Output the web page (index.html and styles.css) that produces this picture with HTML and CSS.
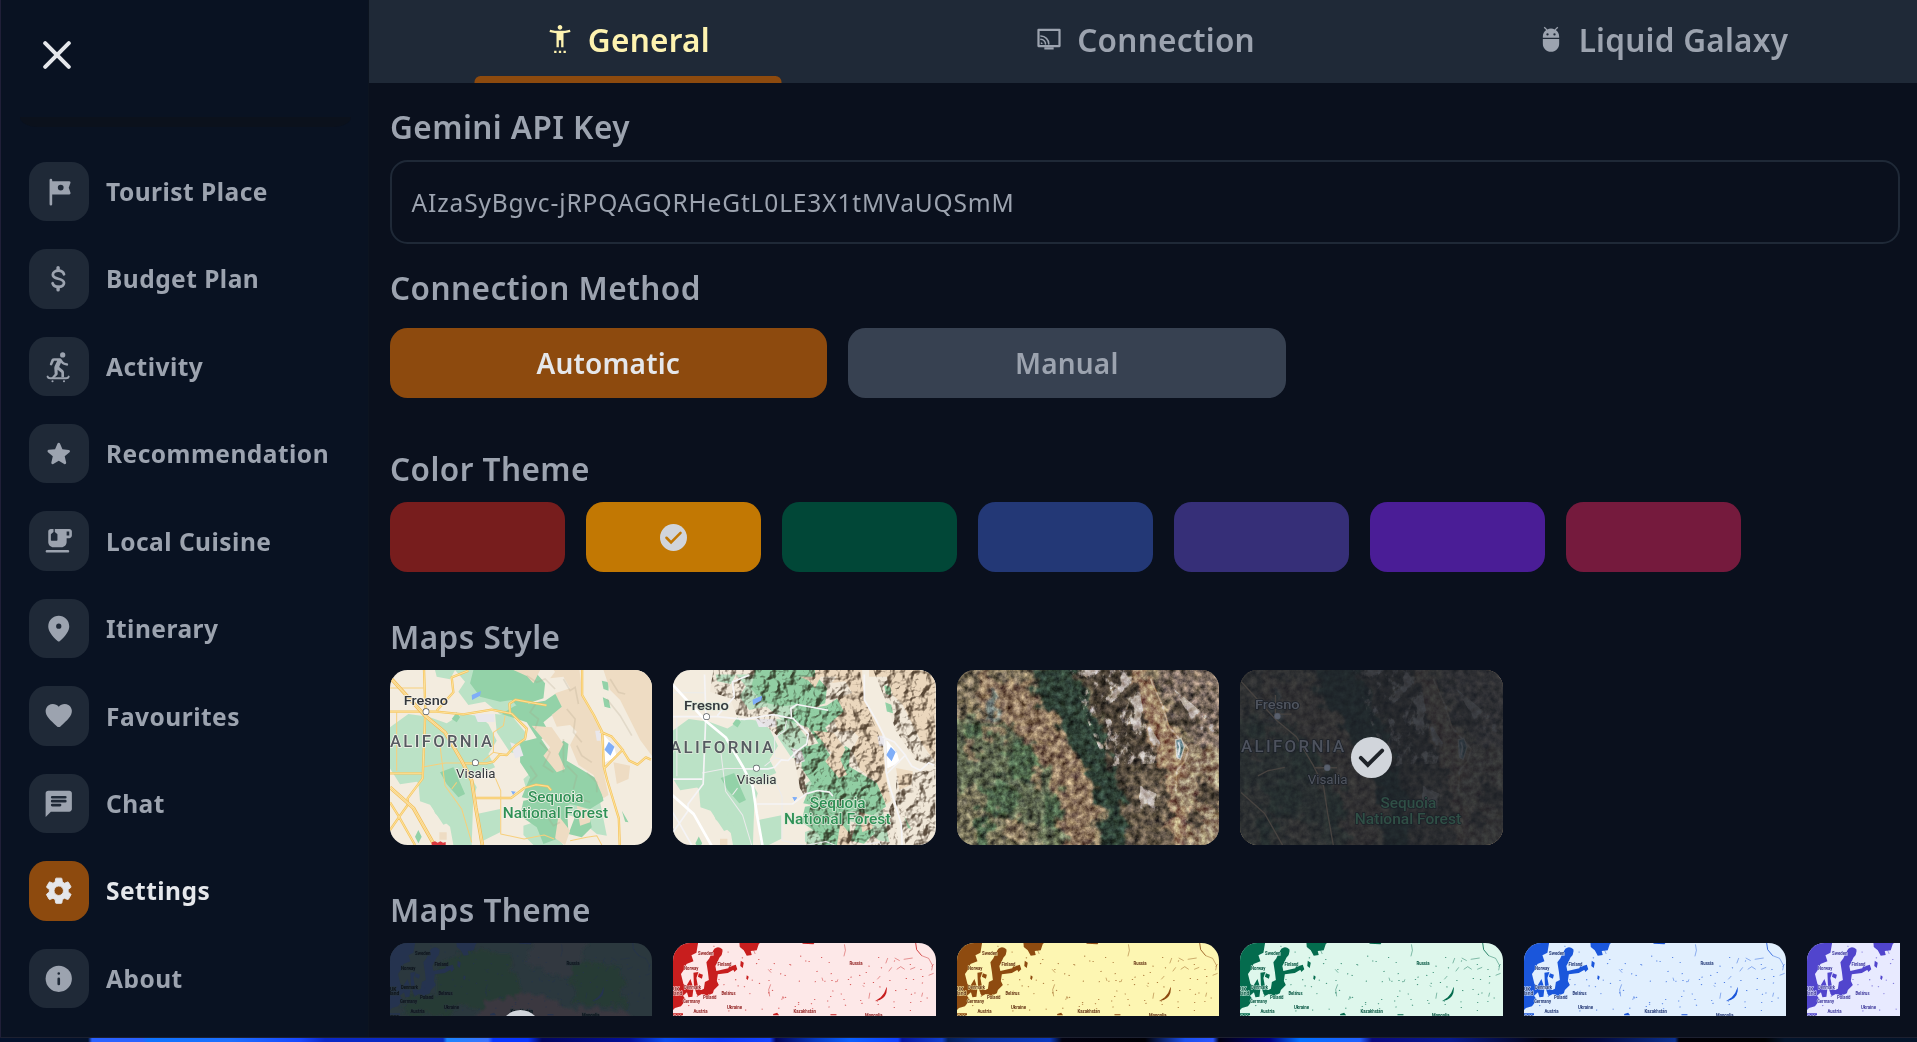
FILE: index.html
```html
<!DOCTYPE html>
<html lang="en">
<head>
<meta charset="utf-8">
<title>Settings</title>
<link rel="stylesheet" href="styles.css">
</head>
<body>
<svg class="defs" aria-hidden="true">
  <defs>
    <symbol id="check" viewBox="2 2 20 20"><circle cx="12" cy="12" r="10" fill="#d1d5db"/><path d="M6.800 12.200l3.400 3.400 7-7" fill="none" stroke="var(--tick)" stroke-width="1.900" stroke-linecap="round"/></symbol>

    <filter id="relief" x="0" y="0" width="100%" height="100%" color-interpolation-filters="sRGB">
      <feTurbulence type="fractalNoise" baseFrequency=".028" numOctaves="5" seed="8"/>
      <feDiffuseLighting surfaceScale="24" lighting-color="#fff" diffuseConstant="1.300"><feDistantLight azimuth="215" elevation="50"/></feDiffuseLighting>
      <feColorMatrix values=".62 0 0 0 .37  0 .66 0 0 .32  0 0 .7 0 .27  0 0 0 1 0"/>
      <feComposite in2="SourceGraphic" operator="in"/>
    </filter>
    <filter id="grain" x="0" y="0" width="100%" height="100%" color-interpolation-filters="sRGB">
      <feTurbulence type="fractalNoise" baseFrequency=".05" numOctaves="5" seed="4"/>
      <feColorMatrix values="1.200 .1 0 0 -.15  1.200 .1 0 0 -.15  1.200 0 .1 0 -.15  0 0 0 0 1"/>
      <feComposite in2="SourceGraphic" operator="in"/>
    </filter>
    <filter id="snow" x="0" y="0" width="100%" height="100%" color-interpolation-filters="sRGB">
      <feTurbulence type="fractalNoise" baseFrequency=".026 .018" numOctaves="5" seed="11"/>
      <feColorMatrix values="0 0 0 0 .74  0 0 0 0 .7  0 0 0 0 .67  7 0 0 0 -3.500"/>
      <feComposite in2="SourceGraphic" operator="in"/>
    </filter>
    <filter id="rough" x="-10%" y="-10%" width="120%" height="120%">
      <feTurbulence type="fractalNoise" baseFrequency=".025" numOctaves="5" seed="3" result="n"/>
      <feDisplacementMap in="SourceGraphic" in2="n" scale="90" xChannelSelector="R" yChannelSelector="G"/>
      <feGaussianBlur stdDeviation="3"/>
    </filter>
    <filter id="haze" x="-10%" y="-10%" width="120%" height="120%">
      <feTurbulence type="fractalNoise" baseFrequency=".09" numOctaves="3" seed="6" result="n"/>
      <feDisplacementMap in="SourceGraphic" in2="n" scale="16" xChannelSelector="R" yChannelSelector="G"/>
      <feGaussianBlur stdDeviation=".8"/>
    </filter>

    <g id="ground">
      <path fill="#f3ecdf" d="M0 0h860v600H0z"/>
      <g fill="#bbe2c6">
        <path d="M165 33h60l-15 28-40-8zM225 33h200l20 110-70 35-60-50-50 10-30-40 20-30z"/>
        <path d="M30 205l55-40 60 8 55 20 45-28 50 5 30 25 25 50-25 40 20 40-60 25-35 28 30 30-5 150h-55l-10-55-45-40-25-70-30-25-50 8-35-55-40-15z"/>
        <path d="M115 370l60-50 35 25 55-5 25 45-20 65-30 10-25-45-15 35 20 35-30 12-40-60-30-10z"/>
        <path d="M345 165l50 5 45 55-10 60-40-5-40-60zM290 465l70-15v70l-60 30zM430 360l60-50 170 120 20 100-30-5-60-50-80-20-60-25zM430 500l60-20 60 78h-90l-30-30zM40 300l25 5 5 20-30 5z"/>
      </g>
      <g fill="#93d2a8">
        <path d="M280 33h180l35 40-5 45-45 15-20 25-30-35-35 5-60-15-30-40z"/>
        <path d="M365 165l40-25 90-15 30-20 40 15-10 35-35 10-30 25 20 35-35 20-35-55z"/>
        <path d="M420 250l60-15 30 45 40-35 15 10-5 50 100 60 10 60-40 25-60-15-65 40-30-50-50-10 25-60-30-45z"/>
        <path d="M430 425l60-10 70 25 5 80-35 20-40 15-20-50-50-35zM590 460l35-5 10 50-30 30-40-10zM115 513l10 20-10 20-10-20zM180 340l40-15 35 80-20 10-35-40zM215 180l15-20 10 15-10 15zM665 65l20 5v25l-15-5zM718 78l22 8-8 20-17-12zM668 115l18 8 5 25-18-5zM725 455l20 35-10-2z"/>
      </g>
      <g fill="#eedcc3">
        <path d="M480 33h118l10 80 50 95 5 55 10 90 12 55-15 10-30-70-45-30-25-60 20-40-20-20-40 5-15-35 30-25-20-40 45-15-20-35-40 5 15-20-30-30z"/>
        <path d="M400 33h80l-20 40-20-22zM455 200l60 5 35 50-15 30 20 45-25 10-40-50 20-25zM620 33h50l20 60 30 30 60 120 37 50V33H690zM700 310l50 10-5 40-35 15zM590 440l45 15-5 35-30 10zM178 520h22v22h-22zM535 470l35 45-15 43-30-20z"/>
      </g>
      <path fill="#e9e7ec" d="M283 165h60v24h-50zM390 250l30 10 10 30-25 8zM645 215h20v30h-15z"/>
      <path fill="#fff" d="M672 228l30 35 8 30-35 17z"/>
      <path fill="#7faef8" d="M275 108l28-12-3 14-24 13zM686 248l17 15-12 27-18-18zM393 396l14 2-8 10z"/>
    </g>
    <g id="shade" fill="none" stroke="#a99c80" stroke-opacity=".22" stroke-width="5">
      <path d="M440 50l30 20 25-10 30 30M550 60l20 35 15-10 10 50M470 130l-20 30 25 20-10 30M560 150l25 30-5 40 25 30M480 250l30 30-20 40 30 20M590 260l15 30 30 20M550 240v100M450 320l20 30-20 20M620 340l30 30v30M500 470l20 30 20-10M690 60l25 40 20 5M680 120l40 50 35 60M600 420l30 10M560 320l30 30-10 40"/>
    </g>
    <g id="highways" fill="none" stroke-linejoin="round">
      <path d="M30 55l105 115 60 50 50 85 30 60 12 80 20 113M30 385l70 62 60 106"/>
    </g>
    <g id="roads" fill="none" stroke-linejoin="round">
      <path d="M132 33l4 120-8 205-45 60v20l-25 35-28 40M30 158h140l80 8 85-14 60 12 45 45-5 30-30 22-25 27-20-2-20 22-20 5h-67M170 155l50-55-5-45 30-12 20-8M390 162l-2-28 18-12 65 12 28 5M288 417h105l40-30 35-10 35 5 10 12M606 33v75l35 60 25 50 5 105 10 40 35 115 3 85M672 328l55-55 20 32 25 12 25-22 15 7M660 218l35 15 35 42M30 430l25 40 50 88M30 343h95"/>
    </g>
    <g id="lanes" fill="none" stroke-linejoin="round">
      <path d="M30 87h100M50 160v175M125 325l70-13h65M180 260l5 40 10 80 50 70 30 100M345 355l17 40v130l70 15 60-12 30 12M310 305l30-25 25 5M375 170l-5 30-30 20v60M215 390l15-20M570 545l50-10 30-5 15 28"/>
    </g>
    <g id="places" font-family="Roboto, sans-serif" paint-order="stroke" stroke-width="4.500" stroke-linejoin="round">
      <g class="town"><text x="71" y="138" font-size="40" font-weight="500" textLength="133" lengthAdjust="spacingAndGlyphs">Fresno</text>
      <text x="228" y="358" font-size="37" textLength="118" lengthAdjust="spacingAndGlyphs">Visalia</text></g>
      <text class="state" x="30" y="265" font-size="50" font-weight="500" textLength="306">ALIFORNIA</text>
      <g class="park" text-anchor="middle" font-weight="500"><text x="527" y="430" font-size="43" textLength="166" lengthAdjust="spacingAndGlyphs">Sequoia</text>
      <text x="526" y="477" font-size="43" textLength="316" lengthAdjust="spacingAndGlyphs">National Forest</text></g>
      <g class="dot" stroke-width="4"><circle cx="138" cy="158" r="8"/><circle cx="286" cy="311" r="8"/></g>
    </g>

    <g id="satellite">
      <path fill="#7b6f59" d="M0 0h900v600H0z"/>
      <g filter="url(#rough)">
        <path fill="#5d664f" d="M0 170l140 10 100-50 90 120 40 120 5 220H230L110 430 0 400z"/>
        <path fill="#747059" d="M0 390h140l60 100 100 20-20 80H0z"/>
        <path fill="#4a6146" d="M120 380l90-20 30 70-50 40-70-20zM190 250l80-10 60 60-20 80-80-20zM110 470h40v110h-40zM60 200l60-10 20 40-50 20zM300 400l60 20-10 100-50-30z"/>
        <path fill="#87765d" d="M60 240l50 10 10 40-40 10zM120 200l80 10-10 30-70-5zM270 320l40 10-10 50-40-10zM170 470l80 20 20 60-80-10z"/>
        <path fill="#8b735b" d="M110 40l110 20 80 60 80 120 60 110 30 90-20 150h-90l10-130-30-110-100-130-120-70z"/>
        <path fill="#6b746e" d="M130 105l60 15-10 50-50-15z"/>
        <path fill="#2d4134" d="M270 10h130l60 140 80 180 20 280h-70l-10-170-60-140-50-90-80-90z"/>
        <path fill="#4a4034" d="M400 10h190l20 160 60 180 20 260H570l-25-200-60-220z"/>
        <path fill="#625647" d="M560 330l80-20 60 100v200H560z"/>
        <path fill="#9a7d64" d="M590 10l50 60 60 150 40 60 20 60-25 60 10 210h-40l-20-230-40-110-60-150z"/>
        <path fill="#7b6c60" d="M640 10h260v270l-120-10-90-100z"/>
        <path fill="#937f68" d="M760 260h140v350H760l-50-200z"/>
        <path fill="#483f34" d="M780 350l50 30 10 60-60-20zM740 440l40 50-10 30-40-50zM690 130l60 50 10 40-60-30z"/>
      </g>
      <path filter="url(#snow)" d="M390 33h200l20 140 50 80-20 60-140 10-60-140zM600 380l60 30-10 90-60-10zM700 90l110 90 20 40-60-10z"/>
      <path fill="none" stroke="#bba38a" stroke-width="5" d="M630 60l36 80 20 65 36 40 22 25-10 35-25 30-3 60"/>
      <path fill="#6f8d93" stroke="#c9c3b8" stroke-width="4" d="M705 243l17-5 10 25-12 38-10-5z"/>
      <path fill="none" stroke="#dce2e8" stroke-width="5" d="M714 250l4 16-4 22"/>
      <path class="overlay" filter="url(#grain)" d="M0 0h900v600H0z"/>
    </g>

    <g id="water" transform="scale(.4983 .3333) translate(-609 -191)">
      <path d="M600 185h60l-4 35-10 8 4 18-14 8-4 15-7 15 5 30 6 5 8-20 6 28-2 25-8 2-3-15-8 10 6 12-10 20-12 5-14 20zM692 208q8-10 16 2 2 15-6 25-4 15-8 25l2 15 24-8 2-8 10 2 1 8-14 12-20 4-2 20 4 12-10 15-2 10-12 8-10-6-8 6-4-10 16-12 2-20 8-6-2-25-3-28 6-12 4-14zM650 280l10-2-4 18 3 25 8 15-4 10-8-8-4-20zM742 185h45l-6 10-4 18-12 2 2 12-10 2-6-16-8-10zM727 260l8-4 3 14-6 8zM745 244l6 6-2 16-5-6zM661 282l8 4-2 12-8-6zM757 288l4 4-2 10-3-4zM868 185l25 5-2 5-22-2z"/>
      <path d="M1038 322q2 30-14 40l-10 4 12-12q8-12 12-32zM810 404l8-4 4 8h-12zM925 405h12v3h-12zM609 402h20v6h-20z"/>
      <path fill="none" stroke="currentColor" stroke-width="2" d="M1096 191l2 20 10 18"/>
      <path fill="none" stroke="currentColor" stroke-width="1.500" stroke-opacity=".7" d="M1108 229l14 8 8 22-2 14M953 195l2 18-3 18M805 315l-4 16 2 20M1040 236l-4 16M1054 236l10 8M1072 240l18-4M1048 264l-6 12M1058 270l8-8 8 8M1085 270l10-6M1025 290l-6 10M940 300l-2 8M908 295l2 10M830 350l-3 12M1128 262l4-8M1122 288l10-6M1110 340l-2 12M800 270l6 10M770 210l4 14M1004 340l-2 18M990 318l3 5"/>
      <path fill="none" stroke="currentColor" stroke-width="2.500" stroke-opacity=".8" stroke-dasharray="2.500 31" d="M700 300l110 4 60-80 70 130 80-120 90 30-40 80M690 200l180 110 90-10 170 60M690 350l90-40 100 80 120-20 110 30M780 240l50 20 90-30 10 80 110-50M720 395l120-10 100-25 150 10M640 380l30-50 60-20 40 40M1010 310l110-20-30 60 30 30M800 340l60 30 70-20"/>
    </g>
    <g id="labels" font-family="Roboto, sans-serif" font-size="4.900" font-weight="700" paint-order="stroke" stroke-width=".8">
      <text x="25" y="11.500" textLength="15.500" lengthAdjust="spacingAndGlyphs">Sweden</text><text x="44.500" y="22.500" textLength="14" lengthAdjust="spacingAndGlyphs">Finland</text><text x="11" y="26.500" textLength="14.500" lengthAdjust="spacingAndGlyphs">Norway</text><text x="176.500" y="22" textLength="13" lengthAdjust="spacingAndGlyphs">Russia</text><text x="11" y="45.500" textLength="17" lengthAdjust="spacingAndGlyphs">Denmark</text><text x="0" y="47.500">UK</text><text x="-6" y="51.500">Ireland</text><text x="30" y="55.500" textLength="13.500" lengthAdjust="spacingAndGlyphs">Poland</text><text x="48.500" y="52" textLength="14" lengthAdjust="spacingAndGlyphs">Belarus</text><text x="10" y="60" textLength="17" lengthAdjust="spacingAndGlyphs">Germany</text><text x="54" y="65.500" textLength="15" lengthAdjust="spacingAndGlyphs">Ukraine</text><text x="20.500" y="70" textLength="14" lengthAdjust="spacingAndGlyphs">Austria</text><text x="120.500" y="70" textLength="22.500" lengthAdjust="spacingAndGlyphs">Kazakhstan</text><text x="192" y="73.500" textLength="17.500" lengthAdjust="spacingAndGlyphs">Mongolia</text><text x="-6" y="74.500">France</text>
    </g>
  </defs>
</svg>

<div class="window">
  <aside class="sidebar">
    <div class="drawer-head">
      <svg class="close" viewBox="0 0 28 28"><path d="M2.200 2.200l23.600 23.600M25.800 2.200L2.200 25.800"/></svg>
    </div>
    <div class="divider"></div>
    <nav class="menu">
      <a class="item"><span class="tile"><svg viewBox="0 0 24 24"><path d="M20 4H7V3a1 1 0 0 0-2 0v18.500a1 1 0 0 0 2 0V14h13c.8 0 1.200-.7.900-1.400L19.600 9l1.300-3.600C21.200 4.700 20.700 4 20 4zm-6.500 7a2.200 2.200 0 1 1 0-4.400 2.200 2.200 0 0 1 0 4.400z"/></svg></span>Tourist Place</a>
      <a class="item"><span class="tile"><svg viewBox="0 0 24 24"><g class="line" stroke-width="2.100"><path d="M16 8.600C15.500 7 14 5.900 11.800 5.900 9.300 5.900 7.500 7.100 7.500 9c0 1.700 1.500 2.400 4.100 3 2.700.6 4.400 1.300 4.400 3.300 0 1.700-1.700 2.900-4.200 2.900-2.300 0-3.900-.9-4.500-2.800"/><path d="M11.500 3.500v2M11.500 18.500v2" stroke-width="2.600"/></g></svg></span>Budget Plan</a>
      <a class="item"><span class="tile"><svg viewBox="0 0 24 24"><circle cx="15" cy="3" r="2"/><path d="M6.500 6.500Q7 5.500 8.500 5.500h4c1 0 1.500.5 2 1.300 1 1.700 2.200 2.400 4 2.500.9.100.9 1.900 0 1.900-2-.1-3.600-.9-4.800-2.200l-1.400 3.200 2.800 2.300c.6.500.9 1 .9 1.700v3.800h-2v-3.500l-2.900-2.300.1 3c0 .7-.2 1.100-.7 1.500L8 21H6l2.900-3.500-.3-4.500c0-.7.200-1.300.5-2l1.700-3.500H8.400l-1.400 3c-.4.900-2.100.4-1.800-.6z"/><path class="line" d="M3.500 19.500c.3 1 .9 1.200 1.900 1.200h12.200c1 0 1.700-.2 2-1.200" stroke-width="1.500"/><circle cx="7.250" cy="23" r=".8"/><circle cx="16" cy="23" r=".8"/></svg></span>Activity</a>
      <a class="item"><span class="tile"><svg viewBox="0 0 24 24"><path d="M12 17.270l4.150 2.510c.76.460 1.690-.22 1.490-1.080l-1.100-4.720 3.670-3.180c.67-.58.310-1.680-.57-1.750l-4.830-.41-1.890-4.460c-.34-.81-1.500-.81-1.840 0L9.190 8.630l-4.830.41c-.88.070-1.240 1.170-.57 1.750l3.670 3.180-1.100 4.720c-.2.860.73 1.540 1.490 1.080l4.150-2.500z"/></svg></span>Recommendation</a>
      <a class="item"><span class="tile"><svg viewBox="0 0 24 24"><path fill-rule="evenodd" d="M20 3H9v2.400l1.810 1.450c.12.090.19.240.19.390v4.260c0 .28-.22.500-.5.500h-4c-.28 0-.5-.22-.5-.5V7.240c0-.15.070-.3.190-.39L8 5.400V3H6c-1.100 0-2 .9-2 2v8c0 2.210 1.790 4 4 4h6c2.210 0 4-1.790 4-4v-3h2c1.100 0 2-.9 2-2V5c0-1.100-.9-2-2-2zm0 5h-2V5h2v3zM3 19h16c.55 0 1 .45 1 1s-.45 1-1 1H3c-.55 0-1-.45-1-1s.45-1 1-1z"/></svg></span>Local Cuisine</a>
      <a class="item"><span class="tile"><svg viewBox="0 0 24 24"><path fill-rule="evenodd" d="M12 2C7.800 2 4 5.220 4 10.200c0 3.180 2.450 6.920 7.340 11.230.38.330.95.330 1.330 0C17.550 17.120 20 13.380 20 10.200 20 5.220 16.200 2 12 2zm0 10a2 2 0 1 1 0-4 2 2 0 0 1 0 4z"/></svg></span>Itinerary</a>
      <a class="item"><span class="tile"><svg viewBox="0 0 24 24"><path d="M13.350 20.130c-.76.690-1.930.690-2.690-.01l-.11-.1C5.300 15.270 1.870 12.160 2 8.280c.06-1.700.93-3.330 2.340-4.290 2.640-1.800 5.900-.96 7.660 1.100 1.760-2.060 5.020-2.910 7.660-1.100 1.410.960 2.280 2.590 2.340 4.290.14 3.880-3.300 6.990-8.550 11.760l-.1.090z"/></svg></span>Favourites</a>
      <a class="item"><span class="tile"><svg viewBox="0 0 24 24"><path d="M20 2H4c-1.100 0-2 .9-2 2v18l4-4h14c1.100 0 2-.9 2-2V4c0-1.100-.9-2-2-2z"/><path class="cut" d="M7 7h10M7 10h10M7 13h6"/></svg></span>Chat</a>
      <a class="item active"><span class="tile"><svg viewBox="0 0 24 24"><path stroke="currentColor" stroke-width=".7" d="M19.140 12.940c.04-.3.060-.61.060-.94 0-.32-.02-.64-.07-.94l2.030-1.580c.18-.14.230-.41.120-.61l-1.920-3.320c-.12-.22-.37-.29-.59-.22l-2.390.96c-.5-.38-1.030-.7-1.620-.94l-.36-2.540c-.04-.24-.24-.41-.48-.41h-3.840c-.24 0-.43.170-.47.410l-.36 2.540c-.59.240-1.130.570-1.620.94l-2.390-.96c-.22-.08-.47 0-.59.220L2.740 8.870c-.12.210-.08.470.12.610l2.030 1.580c-.05.300-.09.630-.09.940s.02.640.07.940l-2.030 1.580c-.18.140-.23.410-.12.610l1.920 3.320c.12.220.37.290.59.220l2.390-.96c.5.380 1.030.7 1.620.94l.36 2.540c.05.240.24.410.48.410h3.840c.24 0 .44-.17.470-.41l.36-2.540c.59-.24 1.130-.56 1.620-.94l2.390.96c.22.080.47 0 .59-.22l1.920-3.320c.12-.22.070-.47-.12-.61l-2.010-1.580zM12 15.600c-1.980 0-3.600-1.620-3.600-3.600s1.620-3.600 3.600-3.600 3.600 1.620 3.600 3.600-1.620 3.600-3.600 3.600z"/></svg></span>Settings</a>
      <a class="item"><span class="tile"><svg viewBox="0 0 24 24"><circle cx="12" cy="12" r="10"/><path class="cut" d="M12 12v4M12 8v.01"/></svg></span>About</a>
    </nav>
  </aside>

  <main class="content">
    <div class="tabs">
      <div class="tab current"><svg viewBox="0 0 24 24"><path d="M20.500 4c-2.610.7-5.670 1-8.500 1s-5.890-.3-8.500-1L3 6c1.860.5 4 .83 6 1v12h2v-6h2v6h2V7c2-.17 4.140-.5 6-1l-.5-2zM12 4c1.100 0 2-.9 2-2s-.9-2-2-2-2 .9-2 2 .9 2 2 2zM7 24h2v-2H7v2zm4 0h2v-2h-2v2zm4 0h2v-2h-2v2z"/></svg><span>General</span></div>
      <div class="tab"><svg viewBox="0 0 24 24"><path class="line" stroke-width="1.900" d="M3 4.100h18v14H3z" stroke-linejoin="round"/><path d="M8 19h8v2H8zM5 14.700c.9 0 1.600.7 1.600 1.600H5z"/><path class="line" stroke-width="1.300" d="M5 12.300a4 4 0 0 1 4 4M5 9.500a6.800 6.800 0 0 1 6.800 6.800"/></svg><span>Connection</span></div>
      <div class="tab"><svg viewBox="0 0 24 24"><path d="M5 16c0 3.870 3.130 7 7 7s7-3.130 7-7v-4H5v4zM16.120 4.370l2.100-2.100-.82-.83-2.300 2.310C14.160 3.280 13.120 3 12 3s-2.160.28-3.090.75L6.600 1.440l-.82.83 2.100 2.100C6.140 5.640 5 7.680 5 10v1h14v-1c0-2.320-1.140-4.360-2.880-5.630zM9 9a1 1 0 1 1 0-2 1 1 0 0 1 0 2zm6 0a1 1 0 1 1 0-2 1 1 0 0 1 0 2z"/></svg><span>Liquid Galaxy</span></div>
    </div>

    <div class="panel">
      <section class="block key">
        <h2>Gemini API Key</h2>
        <div class="field">AIzaSyBgvc-jRPQAGQRHeGtL0LE3X1tMVaUQSmM</div>
      </section>
      <section class="block method">
        <h2>Connection Method</h2>
        <div class="row"><button class="choice on">Automatic</button><button class="choice">Manual</button></div>
      </section>
      <section class="block theme">
        <h2>Color Theme</h2>
        <div class="row">
          <span class="swatch red"></span><span class="swatch amber"><svg><use href="#check"/></svg></span><span class="swatch green"></span><span class="swatch blue"></span><span class="swatch indigo"></span><span class="swatch violet"></span><span class="swatch rose"></span>
        </div>
      </section>
      <section class="block style">
        <h2>Maps Style</h2>
        <div class="row">
          <div class="card">
            <svg class="map" viewBox="30 33 787 525" preserveAspectRatio="none">
              <use href="#ground"/><use href="#shade"/>
              <use href="#lanes" stroke="#f7cf7c" stroke-width="3"/>
              <use href="#roads" stroke="#f5c35d" stroke-width="7"/><use href="#roads" stroke="#fde29a" stroke-width="3"/>
              <use href="#highways" stroke="#f3be5b" stroke-width="11"/><use href="#highways" stroke="#fde8ae" stroke-width="6"/><use href="#highways" stroke="#f3be5b" stroke-width="1.500"/>
              <path fill="#d93a40" d="M155 550l10-3 8 4 8-4 8 4 8-2v9h-42z"/>
              <use href="#places" class="light"/>
            </svg>
          </div>
          <div class="card">
            <svg class="map" viewBox="39 33 788 525" preserveAspectRatio="none">
              <g transform="translate(0 13) scale(1.012)">
                <path fill="#93d2a8" d="M250 0h230v60H250z"/><use href="#ground"/>
                <path fill="#93d2a8" d="M280 0h180v40H280z"/>
                <path fill="#eedcc3" d="M460 0h140v40H460zM620 0h230v40H620z"/>
              </g>
              <path class="multiply" filter="url(#relief)" d="M160 33h440l15 90 55 140 5 90 30 100 10 105H440l10-120-30-50-20-110-50-50-60-50-60-10-20-50-60-20z"/>
              <path class="multiply" filter="url(#relief)" d="M640 33h187v290l-60-20-60-90-30-90zM710 350l117-20v228h-90l-30-130z"/>
              <g transform="translate(0 13) scale(1.012)">
                <path fill="#fff" d="M672 228l30 35 8 30-35 17z"/><path fill="#7faef8" d="M275 108l28-12-3 14-24 13zM685 248l14 15-12 27-16-18zM393 396l14 2-8 10z"/>
                <use href="#lanes" stroke="#ecebec" stroke-width="3"/><use href="#roads" stroke="#f5f4f6" stroke-width="5"/><use href="#highways" stroke="#fff" stroke-width="8"/>
                <use href="#places" class="light terrain"/>
              </g>
            </svg>
          </div>
          <div class="card"><svg class="map" viewBox="50 33 787 525" preserveAspectRatio="none"><use href="#satellite"/></svg></div>
          <div class="card">
            <svg class="map" viewBox="30 33 788 525" preserveAspectRatio="none">
              <use href="#satellite" x="-20"/>
              <path fill="#1d222a" fill-opacity=".82" d="M0 0h900v600H0z"/>
              <g transform="translate(3 12) scale(1.010)">
                <use href="#highways" stroke="#474340" stroke-width="4"/>
                <path fill="none" stroke="#474340" stroke-width="4" d="M80 335l30-15 50-10M250 311h65M132 95v60M140 152h40"/>
                <use href="#places" class="dim"/>
              </g>
            </svg>
            <svg class="badge"><use href="#check"/></svg>
          </div>
        </div>
      </section>
      <section class="block maptheme">
        <h2>Maps Theme</h2>
        <div class="row clip">
          <div class="card night"><svg class="map" viewBox="0 0 262.500 175">
            <path fill="#2b383e" d="M0 0h263v175H0z"/>
            <g filter="url(#haze)"><path fill="#273a34" d="M50 20L80 5l40 8 10 40-30 15-30-5-20 10zM180 15l50 10 5 40-50-5zM10 70l10-20 40 5v20z"/><path fill="#30393f" d="M140-5h60l-20 40-40-10z"/><path fill="#3b3941" d="M88 90V68l14-10 36-8 30 8 14 8 60 2 10 22z"/></g>
            <use href="#water" class="sea"/><use href="#labels" class="ink"/></svg>
            <svg class="badge"><use href="#check"/></svg></div>
          <div class="card t-red"><svg class="map" viewBox="0 0 262.500 175"><use href="#water"/><use href="#labels" class="ink"/></svg></div>
          <div class="card t-amber"><svg class="map" viewBox="0 0 262.500 175"><use href="#water"/><use href="#labels" class="ink"/></svg></div>
          <div class="card t-green"><svg class="map" viewBox="0 0 262.500 175"><use href="#water"/><use href="#labels" class="ink"/></svg></div>
          <div class="card t-blue"><svg class="map" viewBox="0 0 262.500 175"><use href="#water"/><use href="#labels" class="ink"/></svg></div>
          <div class="card t-indigo"><svg class="map" viewBox="0 0 262.500 175"><use href="#water"/><use href="#labels" class="ink"/></svg></div>
        </div>
      </section>
    </div>
  </main>
</div>
<div class="desktop"></div>
</body>
</html>
```
FILE: styles.css
```css
* { box-sizing: border-box; }

body {
  margin: 0;
  width: 1917px;
  height: 1042px;
  overflow: hidden;
  display: flex;
  flex-direction: column;
  background: #0a101d;
  color: #9ca3af;
  font-family: "Noto Sans", sans-serif;
}

.defs { width: 0; height: 0; position: absolute; }

.window {
  height: 1038px;
  display: flex;
  border-left: 1px solid #201f38;
  border-bottom: 1px solid #1d2030;
}

.desktop {
  height: 4px;
  background: linear-gradient(90deg,
    #04122c 0, #04122c 88px, #2a62ff 92px, #2a62ff 142px, #0f74ff 148px, #1d70ff 230px, #1848ff 300px, #0a28c8 325px,
    #0a2cc0 443px, #1b86ff 447px, #3b73ff 488px, #0836ff 493px, #0836ff 528px, #020660 542px, #03109a 630px, #0a4cf0 665px,
    #0a35f0 720px, #1444ff 770px, #03045a 776px, #0639c0 815px, #0a60ff 850px, #1040ff 898px, #0615a0 902px, #1040d0 942px,
    #04205a 948px, #082f98 980px, #0a3ac0 1050px, #020210 1062px, #000006 1145px, #1a50ee 1185px, #2a55ff 1213px, #010012 1219px,
    #000080 1270px, #0070ff 1300px, #2060ff 1360px, #0a0a80 1372px, #061a90 1450px, #02020a 1545px, #020a40 1600px,
    #0a3090 1675px, #010108 1679px, #010204 1765px, #03142c 1785px, #04142a 1917px);
}

/* Sidebar */
.sidebar {
  width: 367.500px;
  flex: none;
  background: #091222;
  border-right: 1px solid #0c1420;
}
.drawer-head { height: 117px; padding: 41px 0 0 42px; }
.close { display: block; width: 28px; height: 28px; fill: none; stroke: #e5e7eb; stroke-width: 4; stroke-linecap: round; }
.divider { height: 10px; margin: 0 17px 0 19px; background: #0b111c; border-radius: 0 0 17.500px 17.500px / 0 0 10px 10px; }
.menu { display: flex; flex-direction: column; gap: 28px; padding: 34.700px 0 0 28px; }
.item {
  display: flex;
  align-items: center;
  gap: 17.500px;
  height: 59.450px;
  font-size: 24.500px;
  font-weight: 700;
  letter-spacing: .48px;
  white-space: nowrap;
}
.tile {
  width: 59.500px;
  height: 59.500px;
  flex: none;
  display: grid;
  place-items: center;
  border-radius: 17.500px;
  background: #1f2937;
}
.tile svg { width: 31.500px; height: 31.500px; fill: currentColor; overflow: visible; }
.line { fill: none; stroke: currentColor; stroke-linecap: round; }
.cut { fill: none; stroke: #1f2937; stroke-width: 2; stroke-linecap: round; }
.active { color: #e5e7eb; }
.active .tile { background: #8d4a0e; }

/* Tabs */
.content { flex: 1; min-width: 0; overflow: hidden; }
.tabs { height: 83px; padding-left: .7px; display: grid; grid-template-columns: repeat(3, 517.300px); background: #1f2937; }
.tab {
  display: flex;
  align-items: center;
  justify-content: center;
  gap: 14px;
  padding-bottom: 5px;
  font-size: 31.500px;
  font-weight: 600;
  letter-spacing: .25px;
}
.tab svg { width: 28px; height: 28px; fill: currentColor; }
.current { position: relative; color: #fef3b0; }
.current::after {
  content: "";
  position: absolute;
  left: 50%;
  bottom: 0;
  width: 307px;
  height: 7px;
  transform: translateX(-50%);
  border-radius: 6px 6px 0 0;
  background: #8d4a0e;
}

/* Settings panel */
.panel { padding: 0 17px 0 21px; height: 933px; overflow: hidden; }
h2 { margin: 0; padding-left: .500px; height: 43px; line-height: 41px; font-size: 31.500px; font-weight: 600; letter-spacing: .46px; }
.key { padding-top: 23px; }
.field {
  height: 84px;
  margin-top: 11px;
  padding: 0 20px;
  line-height: 81px;
  border: 2px solid #1f2937;
  border-radius: 17.500px;
  font-size: 24.500px;
  letter-spacing: .86px;
}
.method { padding-top: 23px; }
.method .row { margin-top: 18px; }
.theme { padding-top: 50px; }
.theme .row, .style .row, .maptheme .row { margin-top: 11px; }
.style { padding-top: 44px; }
.maptheme { padding-top: 44px; }
.row { display: flex; gap: 21px; }
.clip { overflow: hidden; }
.choice {
  width: 437.500px;
  height: 70px;
  border: 0;
  padding: 0 0 1px;
  border-radius: 17.500px;
  background: #374151;
  color: #9ca3af;
  font: 600 28px "Noto Sans", sans-serif;
  letter-spacing: .2px;
}
.choice.on { background: #8d4a0e; color: #e5e7eb; }
.swatch { width: 175px; height: 70px; border-radius: 17.500px; display: grid; place-items: center; }
.swatch svg { width: 27px; height: 27px; --tick: #c27803; }
.red { background: #771d1d; }
.amber { background: #c27803; }
.green { background: #014737; }
.blue { background: #233876; }
.indigo { background: #362f78; }
.violet { background: #4a1d96; }
.rose { background: #751a3d; }

/* Map cards */
.card { position: relative; width: 262.500px; height: 175px; flex: none; overflow: hidden; border-radius: 17.500px; }
.map { display: block; width: 100%; height: 100%; }
.badge { position: absolute; left: 110.750px; top: 67px; width: 41px; height: 41px; --tick: #1f2329; }
.multiply { mix-blend-mode: multiply; }
.overlay { mix-blend-mode: overlay; opacity: .85; }
.light { --halo: #f6f3ec; --town: #33373c; --state: #565b61; --park: #2f9156; --dot: #fff; }
.terrain { --halo: #dfeadb; }
.dim { --halo: #1c2129; --town: #50555f; --state: #4d525d; --park: #2f4f45; --dot: #59606e; }
.town { fill: var(--town); stroke: var(--halo); }
.state { fill: var(--state); stroke: var(--halo); }
.park { fill: var(--park); stroke: var(--halo); }
.dot { fill: var(--dot); stroke: var(--state); }
#water { fill: currentColor; }
.ink { fill: var(--ink); stroke: var(--land); }
.night { --ink: #0c121b; --land: #2b383e; }
.sea { color: #25334f; }
.t-red { color: #c81e1e; --ink: #8e1b1b; --land: #fde8e8; background: #fde8e8; }
.t-amber { color: #8e4b10; --ink: #633112; --land: #fdf6b2; background: #fdf6b2; }
.t-green { color: #046c4e; --ink: #03543f; --land: #def7ec; background: #def7ec; }
.t-blue { color: #1a56db; --ink: #233876; --land: #e1effe; background: #e1effe; }
.t-indigo { color: #5145cd; --ink: #42389d; --land: #e5edff; background: #e8eaff; }
```
